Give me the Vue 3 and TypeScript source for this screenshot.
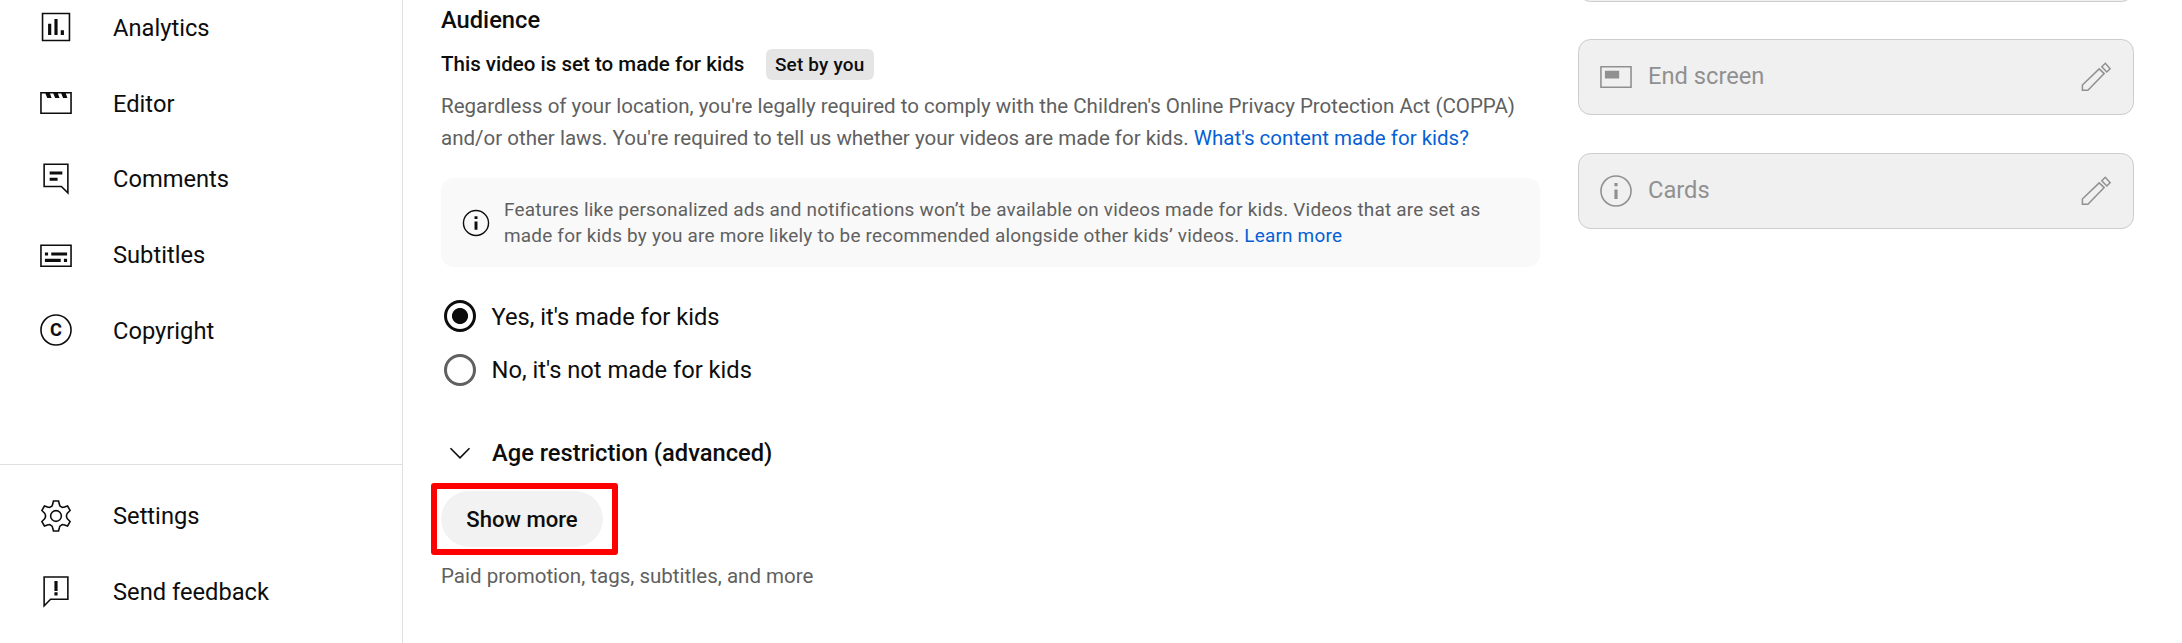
<script setup lang="ts">
import { ref } from 'vue'

type IconName = 'analytics' | 'editor' | 'comments' | 'subtitles' | 'copyright' | 'settings' | 'feedback'
interface NavItem { label: string; icon: IconName }

const icons: Record<IconName, string> = {
  analytics: 'M3 3v18h18V3H3zm17 17H4V4h16v16zM9 17H7v-7h2v7zm4 0h-2V7h2v10zm4 0h-2v-3h2v3z',
  editor: 'M2 5v14h20V5H2zm19 13H3V6h2.3l1.2 2.8h2.7L8.2 6h2.1l1.2 2.8h2.7L13.2 6h2.1l1.2 2.8h2.7L18.2 6H21v12z',
  comments: 'M4 2.2v15h11.2L20 22V2.2H4zm1 1h14v16.4l-3.4-3.4H5v-13zM8 7.2h8v1.9H8zM8 11.2h5v1.9H8z',
  subtitles: 'M2 6v14.2h20V6H2zm19 13.2H3V7h18v12.2zM5 11h2v2H5zM9 11h10v2H9zM5 15h10v2H5zM17 15h2v2h-2z',
  copyright: 'M12 2a10 10 0 1 0 0 20 10 10 0 0 0 0-20zm0 1a9 9 0 1 1 0 18 9 9 0 0 1 0-18z',
  settings: 'M13.6 2.5l.6 2.4Q14.4 6 15.3 6.2q.8.6 1.6.2l2.4-.7L20.9 8.5l-1.7 1.7Q18 12 19.2 13.8l1.7 1.7-1.6 2.8-2.4-.7q-.8-.4-1.6.2-.9.2-1.1 1.3l-.6 2.4h-3.2l-.6-2.4Q9.6 18 8.7 17.8q-.8-.6-1.6-.2l-2.4.7L3.1 15.5l1.7-1.7Q6 12 4.8 10.2L3.1 8.5 4.7 5.7l2.4.7q.8.4 1.6-.2Q9.6 6 9.8 4.9l.6-2.4z',
  feedback: 'M4 2v20l4.8-4.9H20V2H4zm15 14.1H8.4L5 19.6V3h14v13.1zM11 5.1h2v6.3h-2zM11 12.2h2v2h-2z',
}

const primary: NavItem[] = [
  { label: 'Analytics', icon: 'analytics' },
  { label: 'Editor', icon: 'editor' },
  { label: 'Comments', icon: 'comments' },
  { label: 'Subtitles', icon: 'subtitles' },
  { label: 'Copyright', icon: 'copyright' },
]
const secondary: NavItem[] = [
  { label: 'Settings', icon: 'settings' },
  { label: 'Send feedback', icon: 'feedback' },
]

const madeForKids = ref(true)
const audienceOptions = [
  { value: true, label: "Yes, it's made for kids" },
  { value: false, label: "No, it's not made for kids" },
]
const tiles = ['End screen', 'Cards']
</script>

<template>
  <div class="page">
    <aside class="sidebar">
      <nav v-for="(group, g) in [primary, secondary]" :key="g" class="group" :class="g ? 'lower' : 'upper'">
        <a v-for="item in group" :key="item.label" class="nav-item">
          <svg class="icon" viewBox="0 0 24 24">
            <g v-if="item.icon === 'settings'" fill="none" stroke="currentColor">
              <circle cx="12" cy="12" r="3.4" />
              <path :d="icons.settings" />
            </g>
            <path v-else :d="icons[item.icon]" fill="currentColor" fill-rule="evenodd" />
            <text v-if="item.icon === 'copyright'" class="mark" x="12" y="16.1" text-anchor="middle">C</text>
          </svg>
          <span class="nav-label">{{ item.label }}</span>
        </a>
      </nav>
    </aside>

    <main class="details">
      <h2 class="heading">Audience</h2>
      <div class="status">
        <span class="status-text">This video is set to made for kids</span>
        <span class="badge">Set by you</span>
      </div>
      <p class="description">
        Regardless of your location, you're legally required to comply with the Children's Online Privacy Protection Act (COPPA)<br>
        and/or other laws. You're required to tell us whether your videos are made for kids. <a>What's content made for kids?</a>
      </p>
      <div class="notice">
        <svg class="notice-icon" viewBox="0 0 24 24" fill="currentColor">
          <circle cx="12" cy="12" r="9.4" fill="none" stroke="currentColor" stroke-width="1.05" />
          <path d="M10.9 7h2.2v2h-2.2zM10.9 10.8h2.2v6.3h-2.2z" />
        </svg>
        <p>
          Features like personalized ads and notifications won’t be available on videos made for kids. Videos that are set as<br>
          made for kids by you are more likely to be recommended alongside other kids’ videos. <a>Learn more</a>
        </p>
      </div>
      <div class="options" role="radiogroup">
        <div
          v-for="option in audienceOptions"
          :key="option.label"
          class="option"
          role="radio"
          :aria-checked="madeForKids === option.value"
          @click="madeForKids = option.value"
        >
          <span class="radio" :class="{ checked: madeForKids === option.value }"></span>
          <span class="option-label">{{ option.label }}</span>
        </div>
      </div>
      <div class="expander">
        <svg class="icon" viewBox="0 0 38 38" fill="none" stroke="currentColor" stroke-width="1.6">
          <path d="M9.5 14.3l9.5 9.5 9.5-9.5" />
        </svg>
        <span>Age restriction (advanced)</span>
      </div>
      <div class="more">
        <button class="show-more">Show more</button>
        <div class="highlight"></div>
      </div>
      <p class="hint">Paid promotion, tags, subtitles, and more</p>
    </main>

    <aside class="tiles">
      <div class="tile clipped"></div>
      <div v-for="tile in tiles" :key="tile" class="tile">
        <svg class="icon" viewBox="0 0 24 24" fill="currentColor">
          <path v-if="tile === 'End screen'" fill-rule="evenodd" d="M2 5v14h20V5H2zm19 13H3V6h18v12zM5 8.1h9v4.8H5z" />
          <g v-else>
            <circle cx="12" cy="12" r="9.5" fill="none" stroke="currentColor" />
            <path d="M11 7h2v2h-2zM11 11h2v6h-2z" />
          </g>
        </svg>
        <span class="tile-label">{{ tile }}</span>
        <svg class="icon" viewBox="0 0 38 38" fill="none" stroke="currentColor" stroke-width="1.5">
          <path d="M5.4 32.3v-5.3L22.2 10.9l5 4.7L10.9 32.3zM24.8 8.7l3.5-3.4 4.8 5.4-3.3 3.3z" />
        </svg>
      </div>
    </aside>
  </div>
</template>

<style>
html, body { margin: 0; background: #fff; overflow: hidden; }
</style>

<style scoped>
.page {
  display: flex;
  height: 643px;
  overflow: hidden;
  color: #0d0d0d;
  font-family: Roboto, "Liberation Sans", sans-serif;
  font-size: 23.7px;
}
p, h2 { margin: 0; font-weight: 400; }
a { color: #065fd4; }
.icon { width: 38px; height: 38px; flex: none; display: block; }

.sidebar {
  box-sizing: border-box;
  width: 403px;
  flex: none;
  display: flex;
  flex-direction: column;
  justify-content: space-between;
  border-right: 1px solid #e0e0e0;
}
.group { display: flex; flex-direction: column; }
.upper { margin-top: -10.9px; }
.lower { border-top: 1px solid #e0e0e0; padding: 13px 0; }
.nav-item {
  display: flex;
  align-items: center;
  gap: 38px;
  height: 75.8px;
  padding-left: 37px;
  color: #0d0d0d;
}
.upper .nav-label { padding-top: 1.2px; }
.upper .nav-item:nth-child(2) .nav-label { padding-top: 2.2px; }
.mark { font: 700 11.5px Roboto, sans-serif; fill: currentColor; }

.details { width: 1099px; flex: none; margin-left: 38px; padding-top: 4px; }
.heading { font-size: 23.7px; font-weight: 500; line-height: 32px; }
.status {
  display: flex;
  align-items: center;
  gap: 21.6px;
  height: 31px;
  margin-top: 13px;
  font-size: 20.54px;
  font-weight: 500;
}
.status-text { padding-bottom: 2px; }
.badge {
  padding: 0 9px;
  border-radius: 6px;
  background: #e5e5e5;
  font-size: 18.96px;
  line-height: 31px;
  letter-spacing: 0.011em;
}
.description {
  margin-top: 11px;
  color: #606060;
  font-size: 20.53px;
  line-height: 31.6px;
  white-space: nowrap;
}
.notice {
  display: flex;
  align-items: center;
  gap: 12px;
  height: 89px;
  margin-top: 24px;
  padding-left: 19px;
  border-radius: 12.6px;
  background: #f9f9f9;
  box-sizing: border-box;
}
.notice p {
  padding-top: 0.8px;
  color: #606060;
  font-size: 18.96px;
  line-height: 26px;
  letter-spacing: 0.011em;
  white-space: nowrap;
}
.notice-icon { width: 32px; height: 32px; flex: none; }
.options { margin-top: 22px; }
.option { display: flex; align-items: center; gap: 15.5px; height: 54px; padding-left: 3px; }
.option:first-child .option-label { padding-top: 1.6px; }
.radio {
  box-sizing: border-box;
  width: 32px;
  height: 32px;
  border: 3px solid #606060;
  border-radius: 50%;
}
.radio.checked {
  border-color: #0d0d0d;
  background: radial-gradient(circle, #0d0d0d 7.6px, transparent 8.4px);
}
.expander {
  display: flex;
  align-items: center;
  gap: 13px;
  height: 38px;
  margin-top: 37px;
  font-weight: 500;
}
.more { position: relative; display: flex; margin-top: 19px; }
.show-more {
  width: 162px;
  height: 56px;
  padding: 0;
  border: 0;
  border-radius: 28px;
  background: #f2f2f2;
  color: #0d0d0d;
  font: 500 22.12px Roboto, sans-serif;
}
.highlight {
  position: absolute;
  left: -10px;
  top: -8px;
  box-sizing: border-box;
  width: 187px;
  height: 72px;
  border: 6px solid #f00;
  border-radius: 3px;
}
.hint { margin-top: 13.8px; color: #606060; font-size: 20.54px; line-height: 31.6px; }

.tiles {
  width: 556px;
  margin-left: 38px;
  margin-top: -75px;
  display: flex;
  flex-direction: column;
  gap: 38px;
}
.tile {
  box-sizing: border-box;
  height: 76px;
  flex: none;
  display: flex;
  align-items: center;
  padding: 0 18px;
  border: 1px solid #ccc;
  border-radius: 12.6px;
  background: #f0f0f0;
  color: #909090;
}
.tile.clipped { height: 77px; margin-bottom: -1px; }
.tile-label { flex: 1; margin-left: 13px; padding-bottom: 2px; }
</style>
